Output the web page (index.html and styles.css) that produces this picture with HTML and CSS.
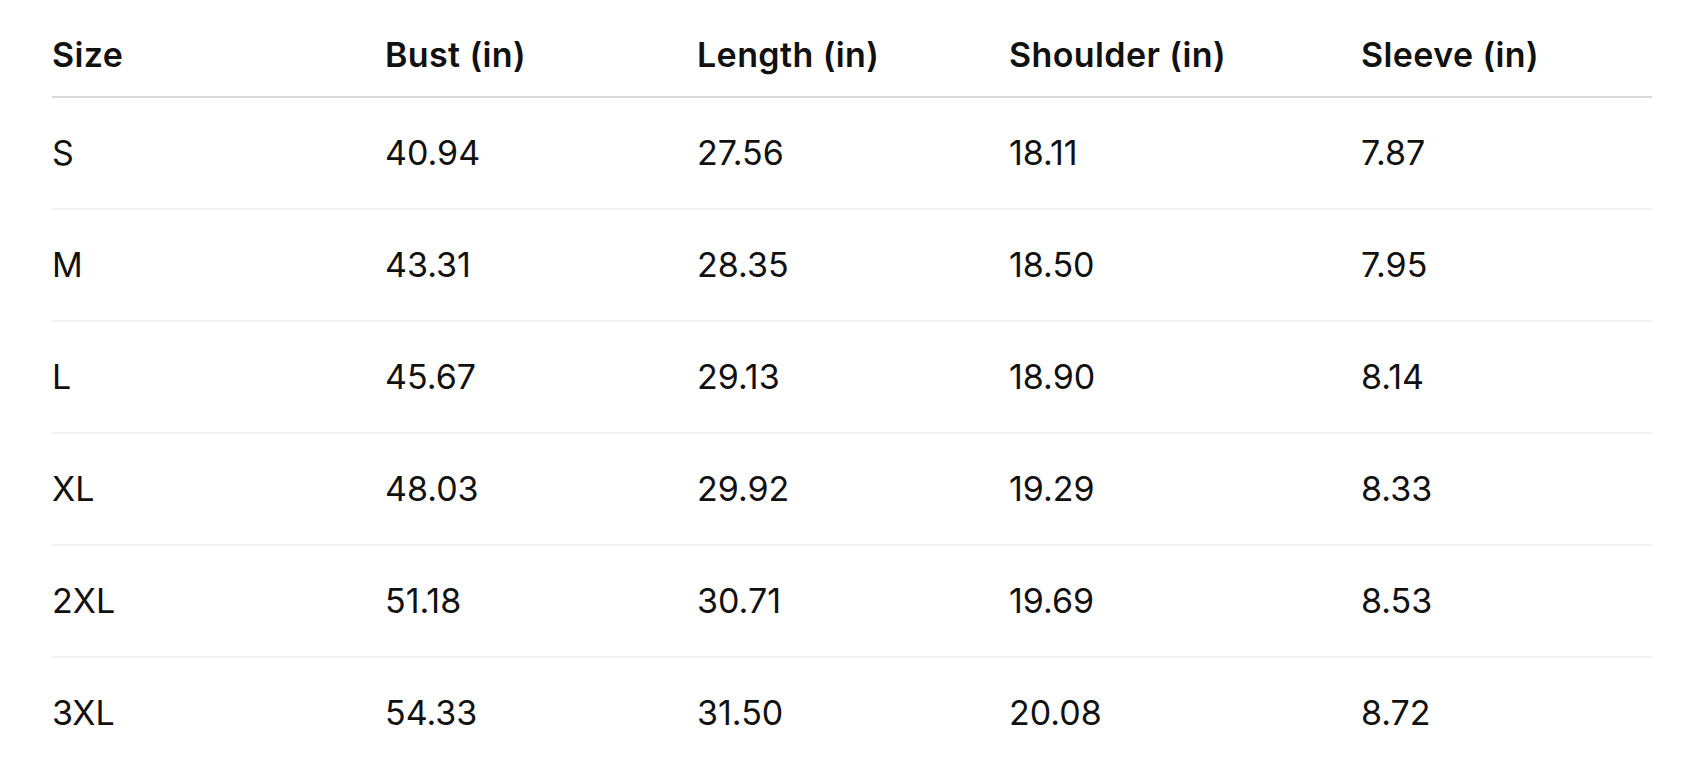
FILE: index.html
```html
<!DOCTYPE html>
<html lang="en">
<head>
<meta charset="utf-8">
<title>Size chart</title>
<link rel="stylesheet" href="styles.css">
</head>
<body>
<main class="page">
  <table class="size-table">
    <colgroup>
      <col class="col-size">
      <col class="col-bust">
      <col class="col-length">
      <col class="col-shoulder">
      <col class="col-sleeve">
    </colgroup>
    <thead>
      <tr>
        <th>Size</th>
        <th>Bust (in)</th>
        <th>Length (in)</th>
        <th>Shoulder (in)</th>
        <th>Sleeve (in)</th>
      </tr>
    </thead>
    <tbody>
      <tr><td>S</td><td>40.94</td><td>27.56</td><td>18.11</td><td>7.87</td></tr>
      <tr><td>M</td><td>43.31</td><td>28.35</td><td>18.50</td><td>7.95</td></tr>
      <tr><td>L</td><td>45.67</td><td>29.13</td><td>18.90</td><td>8.14</td></tr>
      <tr><td>XL</td><td>48.03</td><td>29.92</td><td>19.29</td><td>8.33</td></tr>
      <tr><td>2XL</td><td>51.18</td><td>30.71</td><td>19.69</td><td>8.53</td></tr>
      <tr><td>3XL</td><td>54.33</td><td>31.50</td><td>20.08</td><td>8.72</td></tr>
    </tbody>
  </table>
</main>
</body>
</html>
```

FILE: styles.css
```css
html, body {
  margin: 0;
  padding: 0;
  background: #ffffff;
}

body {
  font-family: Inter, "Noto Sans", "Liberation Sans", sans-serif;
  color: #111111;
}

.page {
  padding: 0 38px 0 52px;
}

.size-table {
  width: 1600px;
  border-collapse: collapse;
  table-layout: fixed;
  font-size: 34px;
  line-height: 50px;
}

.col-size { width: 333px; }
.col-bust { width: 312px; }
.col-length { width: 312px; }
.col-shoulder { width: 352px; }
.col-sleeve { width: 291px; }

.size-table th {
  text-align: left;
  font-weight: 600;
  letter-spacing: 0.4px;
  padding: 30px 0 16px;
  border-bottom: 2px solid #d9d9d9;
}

.size-table td {
  padding: 30px 0;
  font-weight: 400;
  border-bottom: 2px solid #f1f1f1;
}

.size-table tbody tr:last-child td {
  border-bottom: none;
}
```
